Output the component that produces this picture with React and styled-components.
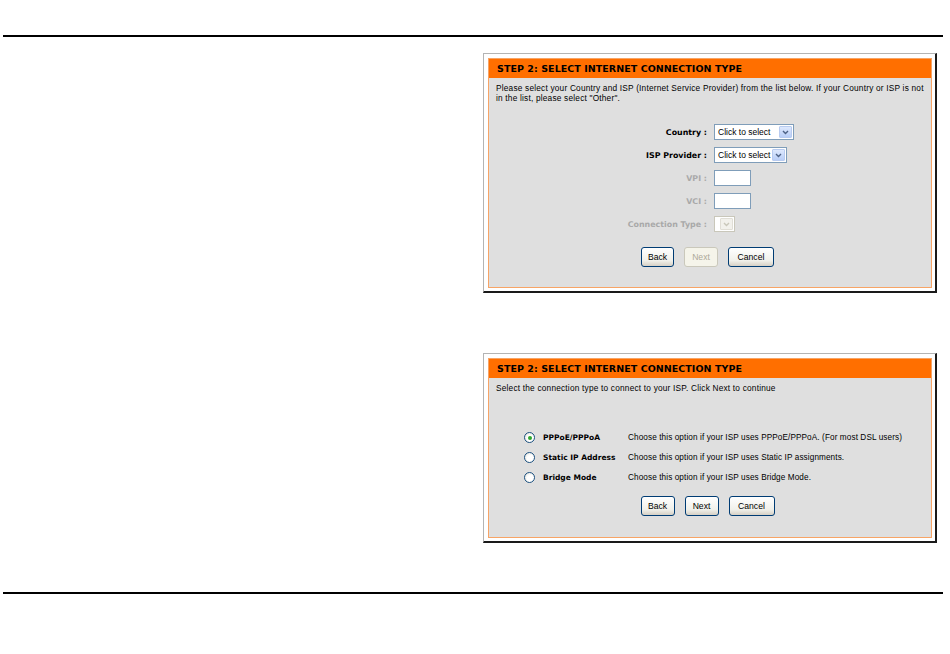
import React from 'react';
import styled, { createGlobalStyle, css } from 'styled-components';

const GlobalStyle = createGlobalStyle`
  html, body {
    margin: 0;
    padding: 0;
    background: #fff;
  }
  body {
    font-family: "Liberation Sans", Arial, sans-serif;
  }
`;

const Page = styled.div`
  width: 950px;
  height: 654px;
  padding-top: 35px;
  box-sizing: border-box;
`;

const Rule = styled.div`
  margin-left: 3px;
  width: 940px;
  height: 2px;
  background: #000;
`;

const Shots = styled.div`
  display: flex;
  flex-direction: column;
  gap: 60px;
  padding: 16px 0 49px 483px;
`;

const Frame = styled.div`
  width: 454px;
  height: ${p => p.$h}px;
  box-sizing: border-box;
  padding: 4px 3px 3px 4px;
  background: #fff;
  border-top: 1px solid #b4b4b4;
  border-left: 1px solid #b4b4b4;
  border-right: 2px solid #1a1a1a;
  border-bottom: 2px solid #1a1a1a;
  display: flex;
`;

const Panel = styled.div`
  flex: 1;
  border: 1px solid #f7a466;
  background: #dfdfdf;
  display: flex;
  flex-direction: column;
`;

const Header = styled.div`
  height: 19px;
  background: #ff6f00;
  display: flex;
  align-items: center;
  padding-left: 8px;
  font-family: "DejaVu Sans", Verdana, sans-serif;
  font-weight: bold;
  font-size: 9.5px;
  letter-spacing: 0.05px;
  color: #000;
`;

const Intro = styled.div`
  padding: 5px 6px 0 7px;
  font-size: 8.3px;
  letter-spacing: 0.2px;
  line-height: 10px;
  color: #000;
`;

const Form = styled.div`
  display: grid;
  grid-template-columns: 225px 1fr;
  row-gap: 7px;
  align-items: center;
  margin-top: 21px;
`;

const Label = styled.div`
  text-align: right;
  padding-right: 7px;
  font-family: "DejaVu Sans", Verdana, sans-serif;
  font-weight: bold;
  font-size: 7.9px;
  color: ${p => (p.$disabled ? '#a9a9a9' : '#000')};
`;

const SelectBox = styled.div`
  width: ${p => p.$w}px;
  height: 16px;
  box-sizing: border-box;
  border: 1px solid ${p => (p.$disabled ? '#c9c7ba' : '#7f9db9')};
  background: #fff;
  display: flex;
  align-items: center;
  justify-content: space-between;
  padding: 1px 1px 1px 3px;
  font-size: 8.5px;
  color: #000;
`;

const Arrow = styled.div`
  width: 13px;
  height: 12px;
  box-sizing: border-box;
  border: 1px solid ${p => (p.$disabled ? '#e0ded6' : '#b8cbf0')};
  border-radius: 1px;
  background: ${p => (p.$disabled ? '#f2f1ec' : 'linear-gradient(#dde8fd, #b9cef7)')};
  display: flex;
  align-items: center;
  justify-content: center;
`;

const TextBox = styled.div`
  width: 37px;
  height: 16px;
  box-sizing: border-box;
  border: 1px solid #7f9db9;
  background: #fff;
`;

const Buttons = styled.div`
  display: flex;
  justify-content: center;
  gap: 10px;
  padding-right: 5px;
  margin-top: ${p => p.$mt}px;
`;

const Button = styled.div`
  width: ${p => p.$w}px;
  height: 20px;
  box-sizing: border-box;
  border-radius: 3px;
  display: flex;
  align-items: center;
  justify-content: center;
  font-size: 8.6px;
  ${p =>
    p.$disabled
      ? css`
          border: 1px solid #cac8bb;
          background: #f5f4ea;
          color: #aca899;
        `
      : css`
          border: 1px solid #003c74;
          background: linear-gradient(#ffffff, #f0f0ea 70%, #d6d0c5);
          color: #000;
        `}
`;

const Options = styled.div`
  display: grid;
  grid-template-columns: 19px 85px 1fr;
  row-gap: 9px;
  align-items: center;
  padding-left: 35px;
  margin-top: 39px;
`;

const Radio = styled.div`
  width: 11px;
  height: 11px;
  box-sizing: border-box;
  border-radius: 50%;
  border: 1px solid #1c5180;
  background: radial-gradient(circle at 60% 60%, #ffffff 40%, #dcdcd5);
  display: flex;
  align-items: center;
  justify-content: center;

  &::after {
    content: '';
    display: ${p => (p.$checked ? 'block' : 'none')};
    width: 4px;
    height: 4px;
    border-radius: 50%;
    background: #2fa82f;
  }
`;

const OptionName = styled.div`
  font-family: "DejaVu Sans", Verdana, sans-serif;
  font-weight: bold;
  font-size: 7.5px;
  color: #000;
`;

const OptionText = styled.div`
  font-size: 8.2px;
  letter-spacing: 0.1px;
  color: #000;
`;

function ChevronDown({ color }) {
  return (
    <svg width="7" height="5" viewBox="0 0 7 5">
      <path d="M1 1 L3.5 3.5 L6 1" fill="none" stroke={color} strokeWidth="1.4" />
    </svg>
  );
}

function Select({ w, text, disabled }) {
  return (
    <SelectBox $w={w} $disabled={disabled}>
      <span>{text}</span>
      <Arrow $disabled={disabled}>
        <ChevronDown color={disabled ? '#c9c7ba' : '#4d6185'} />
      </Arrow>
    </SelectBox>
  );
}

function IspStep() {
  return (
    <Frame $h={240}>
      <Panel>
        <Header>STEP 2: SELECT INTERNET CONNECTION TYPE</Header>
        <Intro>
          Please select your Country and ISP (Internet Service Provider) from the list below. If your Country or ISP is not
          in the list, please select "Other".
        </Intro>
        <Form>
          <Label>Country :</Label>
          <div><Select w={80} text="Click to select" /></div>
          <Label>ISP Provider :</Label>
          <div><Select w={73} text="Click to select" /></div>
          <Label $disabled>VPI :</Label>
          <div><TextBox /></div>
          <Label $disabled>VCI :</Label>
          <div><TextBox /></div>
          <Label $disabled>Connection Type :</Label>
          <div><Select w={21} text="" disabled /></div>
        </Form>
        <Buttons $mt={15}>
          <Button $w={33}>Back</Button>
          <Button $w={34} $disabled>Next</Button>
          <Button $w={46}>Cancel</Button>
        </Buttons>
      </Panel>
    </Frame>
  );
}

const options = [
  { name: 'PPPoE/PPPoA', text: 'Choose this option if your ISP uses PPPoE/PPPoA. (For most DSL users)', checked: true },
  { name: 'Static IP Address', text: 'Choose this option if your ISP uses Static IP assignments.' },
  { name: 'Bridge Mode', text: 'Choose this option if your ISP uses Bridge Mode.' },
];

function TypeStep() {
  return (
    <Frame $h={190}>
      <Panel>
        <Header>STEP 2: SELECT INTERNET CONNECTION TYPE</Header>
        <Intro>Select the connection type to connect to your ISP. Click Next to continue</Intro>
        <Options>
          {options.map(o => (
            <React.Fragment key={o.name}>
              <Radio $checked={o.checked} />
              <OptionName>{o.name}</OptionName>
              <OptionText>{o.text}</OptionText>
            </React.Fragment>
          ))}
        </Options>
        <Buttons $mt={13}>
          <Button $w={34}>Back</Button>
          <Button $w={34}>Next</Button>
          <Button $w={46}>Cancel</Button>
        </Buttons>
      </Panel>
    </Frame>
  );
}

export default function App() {
  return (
    <Page>
      <GlobalStyle />
      <Rule />
      <Shots>
        <IspStep />
        <TypeStep />
      </Shots>
      <Rule />
    </Page>
  );
}
